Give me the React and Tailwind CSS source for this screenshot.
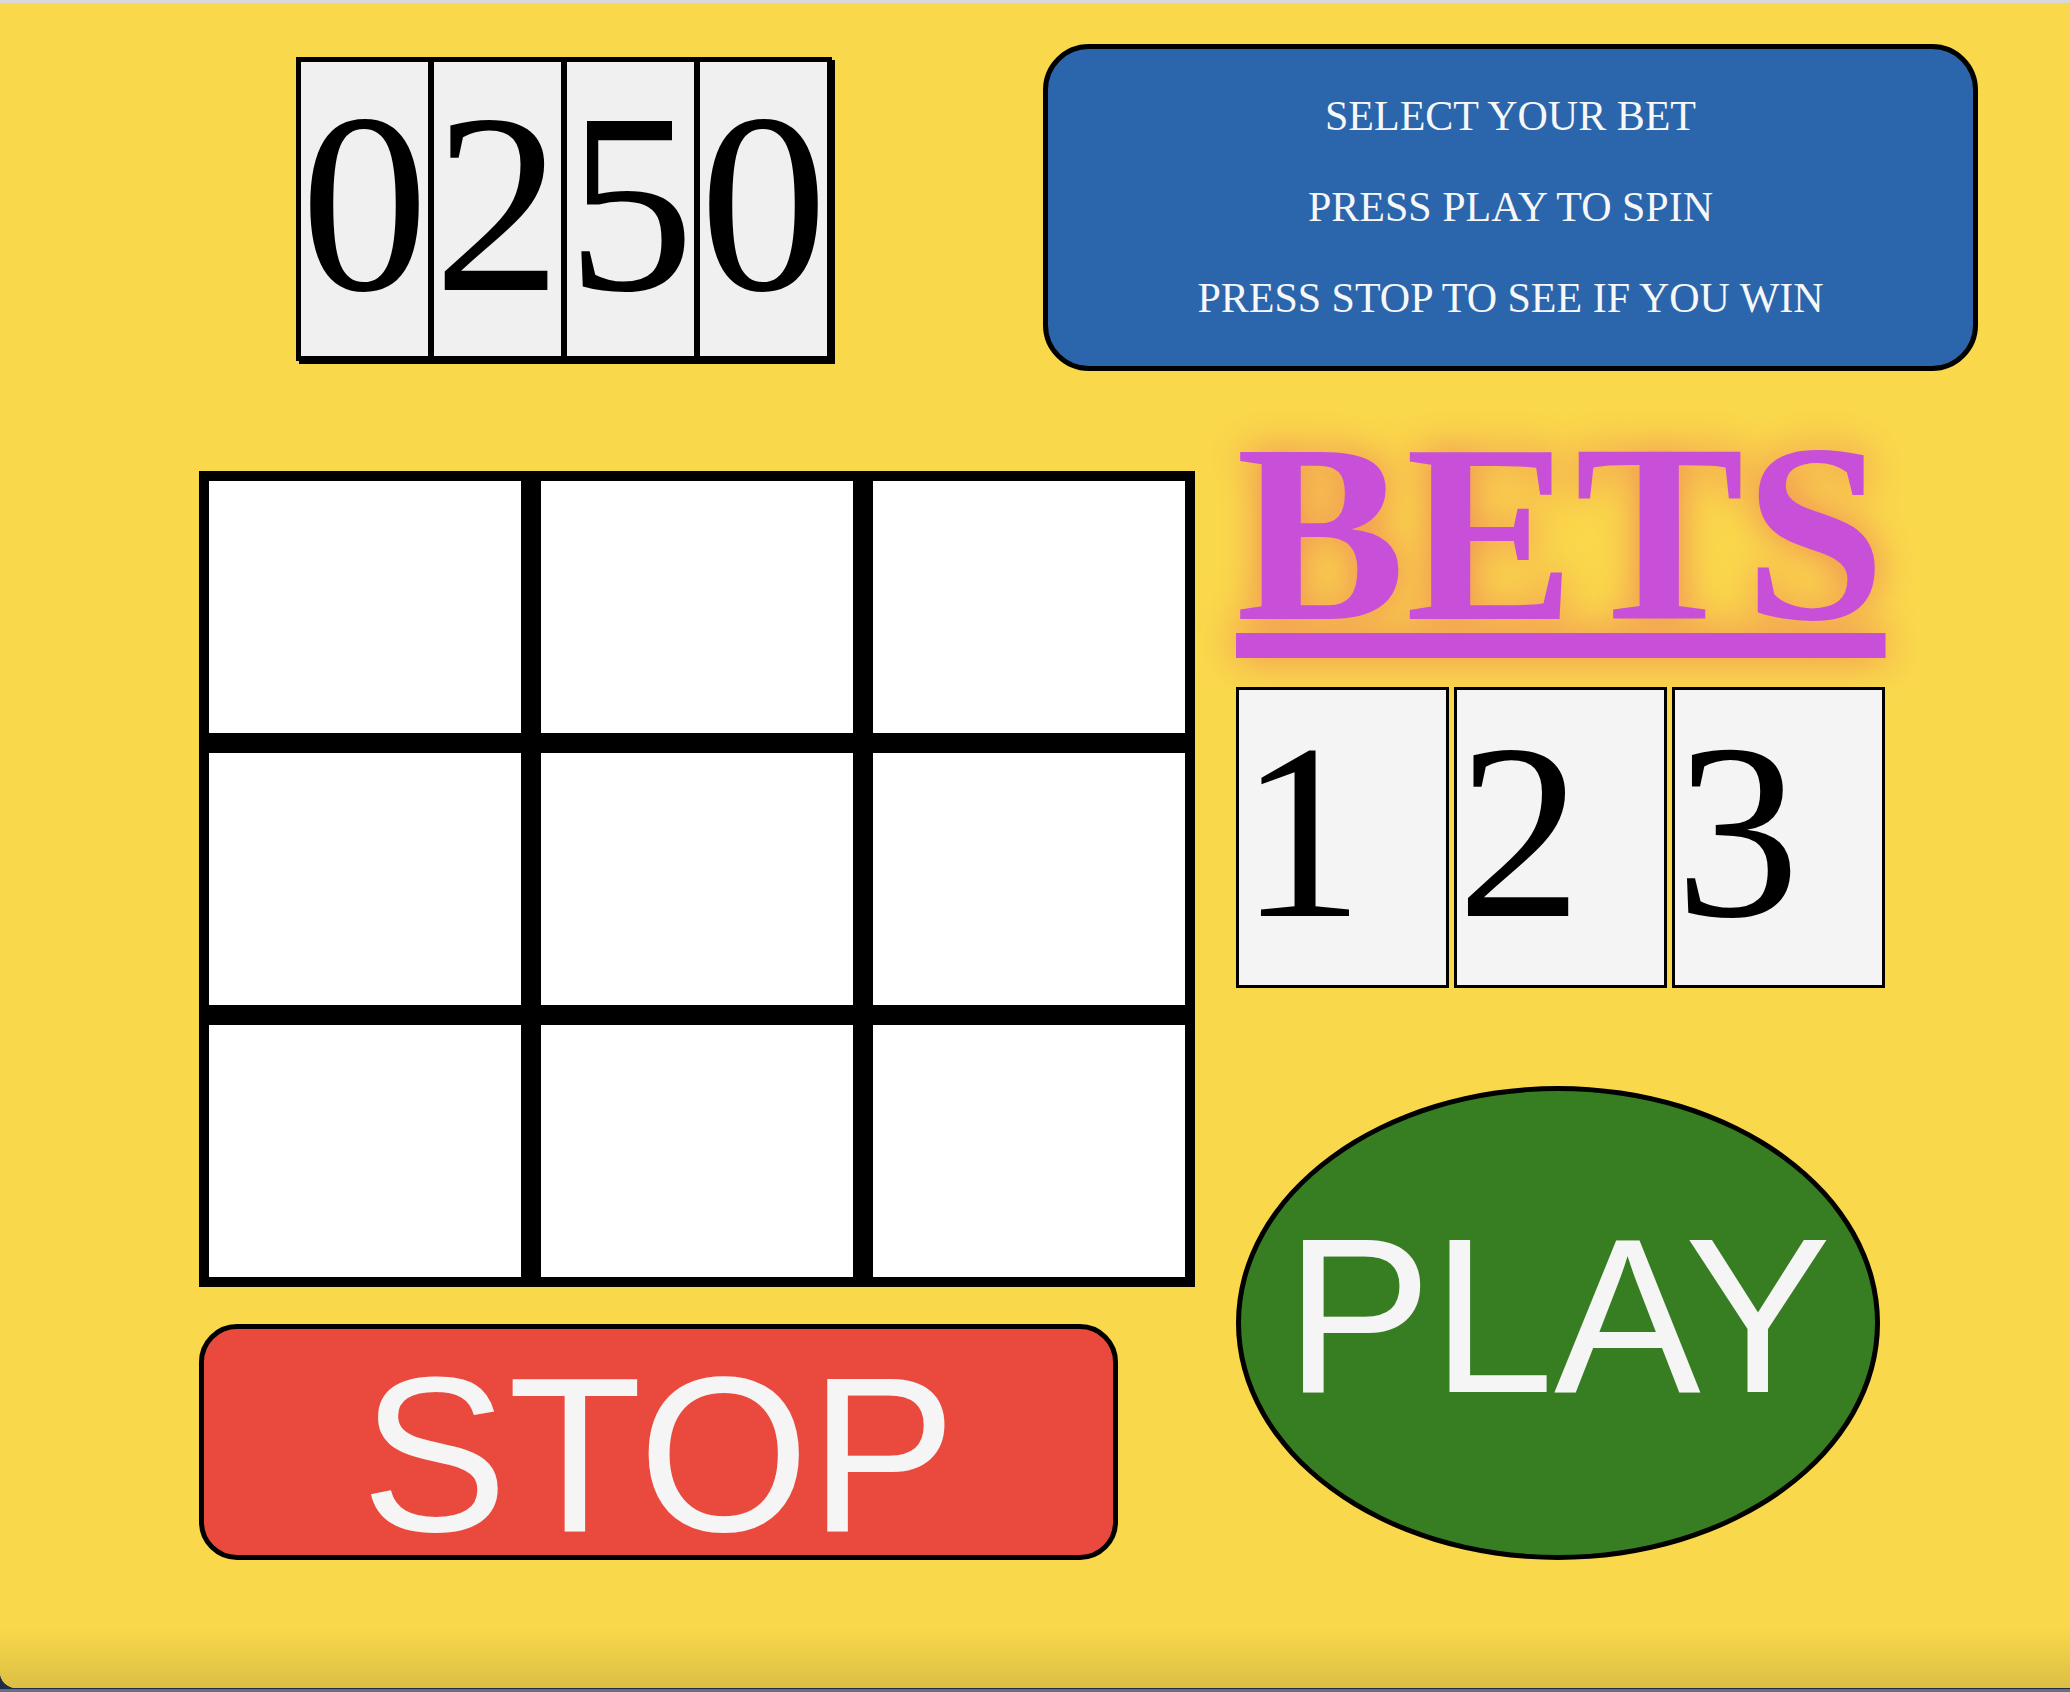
import { useState } from "react";

// Slot machine board: credit counter, instructions, 3x3 reels, bet picker and
// the two big buttons. Sizes are fixed to the 2070px stage.
const CREDITS = ["0", "2", "5", "0"];
const BETS = ["1", "2", "3"];
const REELS = Array.from({ length: 9 }, (_, i) => i);

const SERIF = "font-['Liberation_Serif','Times_New_Roman',serif]";
const SANS = "font-['Liberation_Sans',Arial,sans-serif]";

function Counter() {
  return (
    <div className="ml-[296px] mt-[54px] flex h-[304px] w-[536px] border-[5px] border-black bg-[#f0f0f0] shadow-[3px_3px_0_#000]">
      {CREDITS.map((d, i) => (
        <div
          key={i}
          className={
            i > 0
              ? `flex w-[133px] justify-center border-l-[6px] border-black pt-[14px] text-[256px] leading-[256px] text-black ${SERIF}`
              : `flex w-[127px] justify-center pt-[14px] text-[256px] leading-[256px] text-black ${SERIF}`
          }
        >
          {d}
        </div>
      ))}
    </div>
  );
}

function Instructions() {
  return (
    <div
      className={`ml-[211px] mt-[41px] flex h-[327px] w-[935px] flex-col items-center gap-[43px] rounded-[46px] border-[5px] border-black bg-[#2b66ad] pt-[43px] text-[42px] leading-[48px] text-[#f7f7f7] ${SERIF}`}
    >
      <p>SELECT YOUR BET</p>
      <p>PRESS PLAY TO SPIN</p>
      <p>PRESS STOP TO SEE IF YOU WIN</p>
    </div>
  );
}

function Reels() {
  return (
    <div className="grid w-[996px] grid-cols-3">
      {REELS.map((r) => (
        <div key={r} className="h-[272px] border-[10px] border-black bg-white" />
      ))}
    </div>
  );
}

function BetPicker({ onPick }) {
  return (
    <div className="mt-[25px] flex gap-[5px]">
      {BETS.map((b) => (
        <div
          key={b}
          role="button"
          onClick={() => onPick(b)}
          className={`h-[301px] w-[213px] cursor-pointer border-[3px] border-black bg-[#f4f4f4] pt-[17px] text-left text-[250px] leading-[250px] text-black ${SERIF}`}
        >
          {b}
        </div>
      ))}
    </div>
  );
}

export default function App() {
  const [, setBet] = useState(null);

  return (
    <div className="flex h-[1692px] w-[2070px] flex-col overflow-hidden bg-[#1f2d4a]">
      <div className="h-[3px] shrink-0 bg-[#d9d9d9]" />
      <div className="flex flex-1 flex-col rounded-bl-[16px] bg-[#fad84b]">
        <div className="flex items-start">
          <Counter />
          <Instructions />
        </div>

        <div className="flex items-start">
          <div className="ml-[199px] mt-[100px] flex flex-col">
            <Reels />
            <button
              type="button"
              className={`mt-[37px] flex h-[236px] w-[919px] justify-center rounded-[38px] border-[5px] border-black bg-[#ea4a3e] pt-[16px] text-[220px] leading-[220px] text-[#f5f5f5] ${SANS}`}
            >
              STOP
            </button>
          </div>

          <div className="ml-[41px] mt-[35px] flex flex-col">
            <h1
              className={`text-[254px] font-bold leading-[256px] text-[#c850d8] underline decoration-[25px] underline-offset-[14px] [text-shadow:0_0_40px_#ee8258] ${SERIF}`}
            >
              BETS
            </h1>
            <BetPicker onPick={setBet} />
            <button
              type="button"
              className={`mt-[98px] flex h-[474px] w-[644px] items-center justify-center rounded-[50%] border-[5px] border-black bg-[#377d22] pb-[14px] text-[220px] leading-[220px] text-[#f5f5f5] ${SANS}`}
            >
              PLAY
            </button>
          </div>
        </div>

        <div className="mt-auto h-[60px] rounded-bl-[16px] bg-gradient-to-b from-[#fad84b] to-[#dcbf44]" />
      </div>
      <div className="h-[1px] shrink-0 bg-[#1f2d4a]" />
      <div className="h-[3px] shrink-0 bg-[#6a6f80]" />
    </div>
  );
}
